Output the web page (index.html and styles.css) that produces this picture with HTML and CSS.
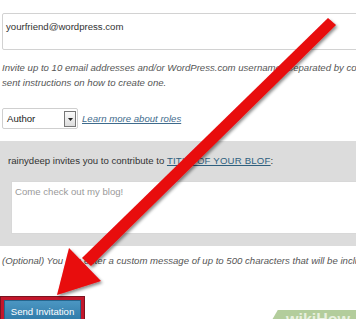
FILE: index.html
```html
<!DOCTYPE html>
<html>
<head>
  <title>Invite Users</title>
  <link rel="stylesheet" href="styles.css">
</head>
<body>
  <div class="page">
    <div class="email-box">yourfriend@wordpress.com</div>

    <p class="help">Invite up to 10 email addresses and/or WordPress.com usernames separated by commas. Those needing a username will be<br>sent instructions on how to create one.</p>

    <div class="role-row">
      <div class="select">
        <span>Author</span>
        <span class="select-btn">
          <svg width="9" height="13" viewBox="0 0 9 13"><path d="M2 6h5l-2.5 3z" fill="#222"/></svg>
        </span>
      </div>
      <a class="roles-link">Learn more about roles</a>
    </div>

    <div class="message-panel">
      <div class="invite-line">rainydeep invites you to contribute to <a class="blog-link">TITLE OF YOUR BLOF</a>:</div>
      <div class="message-box">Come check out my blog!</div>
    </div>

    <p class="help optional">(Optional) You can enter a custom message of up to 500 characters that will be included in the invitation.</p>

    <div class="send-wrap">
      <button class="send-btn">Send Invitation</button>
    </div>
  </div>

  <div class="watermark"><span>wikiHow</span></div>

  <svg class="arrow" width="356" height="319" viewBox="0 0 356 319">
    <defs>
      <filter id="shade" x="-20%" y="-20%" width="140%" height="140%">
        <feDropShadow dx="1.5" dy="2" stdDeviation="1.5" flood-color="#000" flood-opacity="0.45"/>
      </filter>
    </defs>
    <g filter="url(#shade)" fill="#e8080b">
      <polygon points="328,18 336,25 91,266 82,258"/>
      <polygon points="69,248 101,281 57,295"/>
    </g>
  </svg>
</body>
</html>
```

FILE: styles.css
```css
body{
  margin: 0;
  background: #fff;
  font-family: "Liberation Sans", Arial, sans-serif;
  color: #333;
  overflow: hidden;
  width: 356px;
  height: 319px;
  position: relative;
}
.page{
  padding-top: 13px;
  width: 420px;
}
.email-box{
  margin-left: 2px;
  height: 29px;
  border: 1px solid #d2d2d2;
  border-radius: 2px;
  padding: 6px 0 0 3px;
  font-size: 9.6px;
  line-height: 13px;
  color: #333;
}
.help{
  margin: 10px 0 0 2px;
  font-size: 9.6px;
  line-height: 15px;
  font-style: italic;
  color: #555;
  white-space: nowrap;
}
.role-row{
  display: flex;
  align-items: center;
  margin: 18px 0 0 2px;
}
.select{
  height: 19px;
  border: 1px solid #cfcfcf;
  border-radius: 2px;
  display: flex;
  align-items: center;
  justify-content: space-between;
  font-size: 9.6px;
  color: #222;
  padding-left: 4px;
  width: 70px;
}
.select-btn{
  width: 10px;
  height: 14px;
  border: 1px solid #777;
  background: linear-gradient(#fafafa, #ddd);
  margin-right: 1px;
  display: flex;
  align-items: center;
  justify-content: center;
}
.roles-link{
  margin-left: 4px;
  font-size: 9.6px;
  font-style: italic;
  color: #3e6b8c;
  text-decoration: underline;
}
.message-panel{
  margin-top: 12px;
  background: #dcdcdc;
  padding: 13px 0 12px 8px;
}
.invite-line{
  font-size: 9.6px;
  line-height: 14px;
  color: #333;
  white-space: nowrap;
}
.blog-link{
  color: #2f5f7e;
  text-decoration: underline;
  letter-spacing: 0.2px;
}
.message-box{
  margin: 13px 0 0 3px;
  height: 47px;
  background: #fff;
  border: 1px solid #d8d8d8;
  padding: 4px 0 0 3px;
  font-size: 9.6px;
  color: #9a9a9a;
}
.optional{
  margin-top: 7px;
}
.send-wrap{
  margin-top: 29px;
  display: inline-block;
  border: 3px solid #c3172b;
  box-shadow: 0 0 0 1px #7a1420;
  margin-left: 1px;
}
.send-btn{
  display: block;
  font-family: "Liberation Sans", Arial, sans-serif;
  font-size: 9.6px;
  color: #fff;
  background: linear-gradient(#4b96c2, #2d77a5);
  border: 1px solid #24658d;
  padding: 5px 0 6px 0;
  width: 77px;
  white-space: nowrap;
}
.watermark{
  position: absolute;
  left: 272px;
  top: 310px;
  width: 100px;
  height: 20px;
  background: #b3cd9c;
  transform: skewX(-30deg);
  overflow: hidden;
}
.watermark span{
  display: block;
  transform: skewX(30deg);
  margin-left: 14px;
  font-size: 16px;
  font-weight: bold;
  color: #e8f0df;
  line-height: 20px;
}
.arrow{
  position: absolute;
  left: 0;
  top: 0;
}
```
